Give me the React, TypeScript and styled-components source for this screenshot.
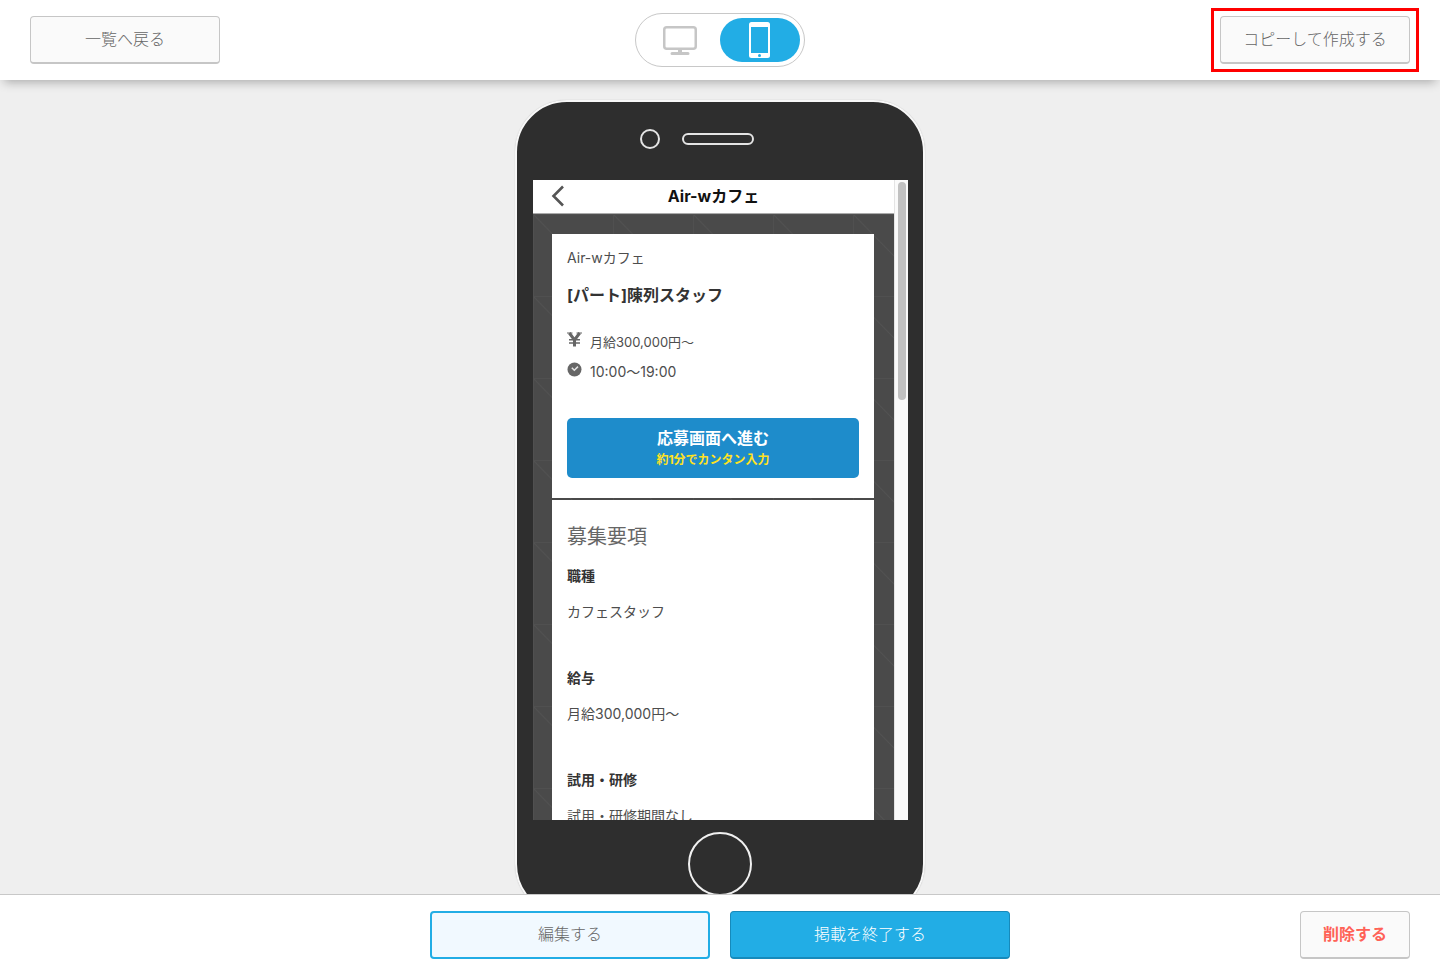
import React from "react";
import styled, { createGlobalStyle, css } from "styled-components";

const GlobalStyle = createGlobalStyle`
  *, *::before, *::after { box-sizing: border-box; }
  body {
    margin: 0;
    background: #efefef;
    color: #4d4d4d;
    font-family: "Noto Sans CJK JP", sans-serif;
  }
  h1, h2, p, dl, dt, dd, ul { margin: 0; padding: 0; }
  button { font-family: inherit; cursor: pointer; }
`;

const Page = styled.div`
  display: flex;
  flex-direction: column;
  height: 100vh;
`;

const bar = css`
  flex: none;
  display: grid;
  grid-template-columns: 1fr auto 1fr;
  align-items: center;
  padding: 0 30px;
  background: #fff;
`;

const TopBar = styled.header`
  ${bar}
  height: 80px;
  position: relative;
  z-index: 1;
  box-shadow: 0 6px 10px -4px rgba(0, 0, 0, 0.3);
`;

const BottomBar = styled.footer`
  ${bar}
  height: 81px;
  border-top: 1px solid #c8c8c8;
`;

const Actions = styled.div`
  grid-column: 2;
  display: flex;
  gap: 20px;
`;

type Tone = "plain" | "outline" | "primary" | "danger";

const tones = {
  plain: css`
    background: #fafafa;
    border: 1px solid #c6c6c6;
    border-bottom-width: 2px;
    color: #666;
  `,
  outline: css`
    background: #f1f9ff;
    border: 2px solid #22ade5;
    color: #666;
  `,
  primary: css`
    background: #22ade5;
    border: 1px solid #168abb;
    border-bottom-width: 2px;
    color: #fff;
  `,
  danger: css`
    background: #fafafa;
    border: 1px solid #c6c6c6;
    border-bottom-width: 2px;
    color: #ff6257;
    font-weight: 700;
  `,
};

const Button = styled.button<{ $tone: Tone; $width: number }>`
  display: block;
  width: ${(p) => p.$width}px;
  height: 48px;
  padding: 0 0 4px;
  border-radius: 4px;
  font-size: 16px;
  line-height: 24px;
  font-weight: 300;
  ${(p) => tones[p.$tone]}
`;

const Highlight = styled.div`
  justify-self: end;
  margin-right: -9px;
  padding: 5px 6px;
  border: 3px solid #f00;
`;

const EndSlot = styled.div`
  justify-self: end;
`;

const DeviceSwitch = styled.div`
  display: flex;
  padding: 4px;
  border: 1px solid #c8c8c8;
  border-radius: 27px;
`;

const DeviceButton = styled.button<{ $active?: boolean }>`
  display: flex;
  align-items: center;
  justify-content: center;
  width: 80px;
  height: 44px;
  padding: 0;
  border: 0;
  border-radius: 22px;
  background: ${(p) => (p.$active ? "#22ade5" : "transparent")};
`;

const Stage = styled.main`
  flex: 1;
  min-height: 0;
  overflow: hidden;
  display: flex;
  justify-content: center;
  align-items: flex-start;
  padding-top: 20px;
`;

const Phone = styled.div`
  flex: none;
  display: flex;
  flex-direction: column;
  padding: 0 15px 18px 16px;
  border: 2px solid #f8f8f8;
  border-radius: 52px;
  background: #2e2e2e;
  box-shadow: 0 0 1px #aaa;
`;

const PhoneTop = styled.div`
  display: flex;
  align-items: center;
  gap: 22px;
  height: 78px;
  padding: 0 0 4px 107px;
`;

const Camera = styled.span`
  width: 20px;
  height: 20px;
  border: 2px solid #e4e4e4;
  border-radius: 50%;
`;

const Speaker = styled.span`
  width: 72px;
  height: 12px;
  border: 2px solid #e4e4e4;
  border-radius: 6px;
`;

const PhoneBottom = styled.div`
  display: flex;
  justify-content: center;
  padding: 12px 1px 0 0;
`;

const HomeButton = styled.span`
  width: 64px;
  height: 64px;
  border: 2px solid #f0f0f0;
  border-radius: 50%;
`;

const Screen = styled.div`
  display: flex;
  width: 375px;
  height: 640px;
  overflow: hidden;
  font-family: Inter, "Noto Sans CJK JP", sans-serif;
`;

const Viewport = styled.div`
  flex: 1;
  overflow: hidden;
`;

const ScrollTrack = styled.div`
  width: 14px;
  padding: 2px 2px 0 3px;
  border-left: 1px solid #e4e4e4;
  background: #fafafa;
`;

const ScrollThumb = styled.div`
  height: 218px;
  border-radius: 4px;
  background: #c1c1c1;
`;

const AppBar = styled.div`
  display: grid;
  grid-template-columns: 32px 1fr 32px;
  align-items: center;
  height: 34px;
  padding-bottom: 2px;
  border-bottom: 1px solid #aaa;
  background: #fff;
`;

const BackButton = styled.button`
  display: flex;
  justify-content: flex-end;
  padding: 0;
  border: 0;
  background: none;
`;

const AppTitle = styled.h1`
  font-size: 16px;
  line-height: 24px;
  font-weight: 700;
  text-align: center;
  color: #111;
`;

const Backdrop = styled.div`
  display: flex;
  flex-direction: column;
  gap: 2px;
  padding: 20px 20px 0 19px;
  background-color: #4a4a4a;
  background-image: linear-gradient(#505050 1px, transparent 1px),
    linear-gradient(to right, #505050 1px, transparent 1px),
    linear-gradient(
      to top right,
      transparent calc(50% - 1px),
      #525252 50%,
      transparent calc(50% + 1px)
    );
  background-size: 80px 82px;
`;

const Card = styled.section`
  padding: 14px 15px 20px;
  background: #fff;
`;

const ShopName = styled.p`
  font-size: 14px;
  line-height: 20px;
`;

const JobTitle = styled.h2`
  margin: 15px 0 20px;
  font-size: 16px;
  line-height: 24px;
  font-weight: 700;
  color: #333;
`;

const Facts = styled.ul`
  list-style: none;
`;

const Fact = styled.li<{ $size: number }>`
  display: flex;
  align-items: center;
  gap: 8px;
  height: 30px;
  font-size: ${(p) => p.$size}px;
  line-height: 20px;

  svg {
    flex: none;
    margin-bottom: 5px;
  }
`;

const ApplyButton = styled.button`
  display: flex;
  flex-direction: column;
  align-items: center;
  justify-content: center;
  width: 100%;
  height: 60px;
  margin-top: 31px;
  padding: 0;
  border: 0;
  border-radius: 5px;
  background: #1e8ccb;
  color: #fff;
  font-size: 16px;
  line-height: 24px;
  font-weight: 700;
`;

const ApplyNote = styled.small`
  font-size: 12px;
  line-height: 20px;
  color: #ffe21f;
`;

const SectionTitle = styled.h2`
  margin: 8px 0 14px;
  font-size: 20px;
  line-height: 30px;
  font-weight: 400;
  color: #666;
`;

const Details = styled.dl`
  display: flex;
  flex-direction: column;
  gap: 46px;
  font-size: 14px;
  line-height: 20px;
`;

const Term = styled.dt`
  margin-bottom: 16px;
  font-weight: 700;
  color: #333;
`;

const details = [
  ["職種", "カフェスタッフ"],
  ["給与", "月給300,000円〜"],
  ["試用・研修", "試用・研修期間なし"],
];

const DesktopIcon = () => (
  <svg width="34" height="30" viewBox="0 0 34 30" fill="none" aria-hidden="true">
    <rect x="1.25" y="2.25" width="31.5" height="21.5" rx="2.5" stroke="#c6c6c6" strokeWidth="2.5" />
    <path d="M15 25h4v2h6a1 1 0 0 1 0 3H9a1 1 0 0 1 0-3h6z" fill="#c6c6c6" />
  </svg>
);

const MobileIcon = () => (
  <svg width="22" height="36" viewBox="0 0 22 36" aria-hidden="true">
    <rect width="21" height="36" rx="2.5" fill="#fff" />
    <rect x="2" y="5" width="17" height="26" fill="#22ade5" />
    <circle cx="10.5" cy="33.5" r="1.5" fill="#22ade5" />
  </svg>
);

const ChevronIcon = () => (
  <svg width="14" height="22" viewBox="0 0 14 22" fill="none" aria-hidden="true">
    <path d="M12 1.5 2.5 11l9.5 9.5" stroke="#555" strokeWidth="2.6" />
  </svg>
);

const YenIcon = () => (
  <svg width="15" height="15" viewBox="0 0 15 15" fill="none" stroke="#666" aria-hidden="true">
    <path d="M2.300 1 7.500 8l5.200-7" strokeWidth="3" />
    <path d="M0 1h5.500M9.500 1H15" strokeWidth="1.200" />
    <path d="M7.500 7v7.500" strokeWidth="3" />
    <path d="M2 7.800h11M2 11h11" strokeWidth="1.600" />
  </svg>
);

const ClockIcon = () => (
  <svg width="15" height="15" viewBox="0 0 15 15" fill="none" aria-hidden="true">
    <circle cx="7.5" cy="7.5" r="7" fill="#666" />
    <path d="m4.800 5.800 2.500 2.400 3.700-3.600" stroke="#e4e4e4" strokeWidth="1.500" />
  </svg>
);

export default function App() {
  return (
    <>
      <GlobalStyle />
      <Page>
        <TopBar>
          <Button type="button" $tone="plain" $width={190}>
            一覧へ戻る
          </Button>
          <DeviceSwitch role="group" aria-label="プレビュー">
            <DeviceButton type="button" aria-label="PC" aria-pressed={false}>
              <DesktopIcon />
            </DeviceButton>
            <DeviceButton type="button" aria-label="スマートフォン" aria-pressed $active>
              <MobileIcon />
            </DeviceButton>
          </DeviceSwitch>
          <Highlight>
            <Button type="button" $tone="plain" $width={190}>
              コピーして作成する
            </Button>
          </Highlight>
        </TopBar>

        <Stage>
          <Phone>
            <PhoneTop>
              <Camera />
              <Speaker />
            </PhoneTop>
            <Screen>
              <Viewport>
                <AppBar>
                  <BackButton type="button" aria-label="戻る">
                    <ChevronIcon />
                  </BackButton>
                  <AppTitle>Air-wカフェ</AppTitle>
                </AppBar>
                <Backdrop>
                  <Card>
                    <ShopName>Air-wカフェ</ShopName>
                    <JobTitle>[パート]陳列スタッフ</JobTitle>
                    <Facts>
                      <Fact $size={13}>
                        <YenIcon />
                        月給300,000円〜
                      </Fact>
                      <Fact $size={14}>
                        <ClockIcon />
                        10:00〜19:00
                      </Fact>
                    </Facts>
                    <ApplyButton type="button">
                      応募画面へ進む
                      <ApplyNote>約1分でカンタン入力</ApplyNote>
                    </ApplyButton>
                  </Card>
                  <Card>
                    <SectionTitle>募集要項</SectionTitle>
                    <Details>
                      {details.map(([term, value]) => (
                        <div key={term}>
                          <Term>{term}</Term>
                          <dd>{value}</dd>
                        </div>
                      ))}
                    </Details>
                  </Card>
                </Backdrop>
              </Viewport>
              <ScrollTrack>
                <ScrollThumb />
              </ScrollTrack>
            </Screen>
            <PhoneBottom>
              <HomeButton />
            </PhoneBottom>
          </Phone>
        </Stage>

        <BottomBar>
          <Actions>
            <Button type="button" $tone="outline" $width={280}>
              編集する
            </Button>
            <Button type="button" $tone="primary" $width={280}>
              掲載を終了する
            </Button>
          </Actions>
          <EndSlot>
            <Button type="button" $tone="danger" $width={110}>
              削除する
            </Button>
          </EndSlot>
        </BottomBar>
      </Page>
    </>
  );
}
